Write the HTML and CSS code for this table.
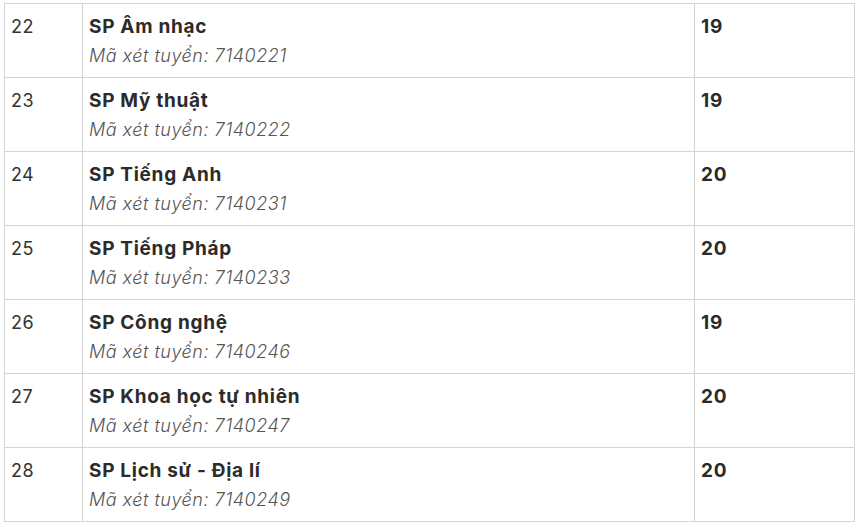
FILE: index.html
```html
<!DOCTYPE html>
<html lang="vi">
<head>
  <meta charset="UTF-8">
  <meta name="viewport" content="width=device-width, initial-scale=1.0">
  <title>Điểm chuẩn</title>
  <link rel="stylesheet" href="styles.css">
</head>
<body>
  <table class="scores">
    <colgroup>
      <col class="col-no">
      <col class="col-name">
      <col class="col-score">
    </colgroup>
    <tbody>
      <tr>
        <td>22</td>
        <td><strong>SP Âm nhạc</strong><em>Mã xét tuyển: 7140221</em></td>
        <td><strong>19</strong></td>
      </tr>
      <tr>
        <td>23</td>
        <td><strong>SP Mỹ thuật</strong><em>Mã xét tuyển: 7140222</em></td>
        <td><strong>19</strong></td>
      </tr>
      <tr>
        <td>24</td>
        <td><strong>SP Tiếng Anh</strong><em>Mã xét tuyển: 7140231</em></td>
        <td><strong>20</strong></td>
      </tr>
      <tr>
        <td>25</td>
        <td><strong>SP Tiếng Pháp</strong><em>Mã xét tuyển: 7140233</em></td>
        <td><strong>20</strong></td>
      </tr>
      <tr>
        <td>26</td>
        <td><strong>SP Công nghệ</strong><em>Mã xét tuyển: 7140246</em></td>
        <td><strong>19</strong></td>
      </tr>
      <tr>
        <td>27</td>
        <td><strong>SP Khoa học tự nhiên</strong><em>Mã xét tuyển: 7140247</em></td>
        <td><strong>20</strong></td>
      </tr>
      <tr>
        <td>28</td>
        <td><strong>SP Lịch sử - Địa lí</strong><em>Mã xét tuyển: 7140249</em></td>
        <td><strong>20</strong></td>
      </tr>
    </tbody>
  </table>
</body>
</html>
```

FILE: styles.css
```css
* {
  margin: 0;
  padding: 0;
  box-sizing: border-box;
}

body {
  background-color: #fff;
  padding: 3px 0 0 4px;
  font-family: Inter, "Open Sans", sans-serif;
  color: #333;
}

.scores {
  width: 850px;
  table-layout: fixed;
  border-collapse: collapse;
  font-size: 18px;
  line-height: 29px;
}

.col-no {
  width: 78px;
}

.col-name {
  width: 612px;
}

.col-score {
  width: 160px;
}

.scores td {
  border: 1px solid #d4d4d4;
  padding: 8px 6px 7px;
  height: 74px;
  vertical-align: top;
  letter-spacing: 0.4px;
}

.scores strong {
  display: block;
  font-size: 19px;
  font-weight: 700;
  letter-spacing: 0.7px;
  color: #2b2b2b;
}

.scores em {
  display: block;
  font-weight: 300;
  letter-spacing: 0.5px;
  color: #555;
}
```
